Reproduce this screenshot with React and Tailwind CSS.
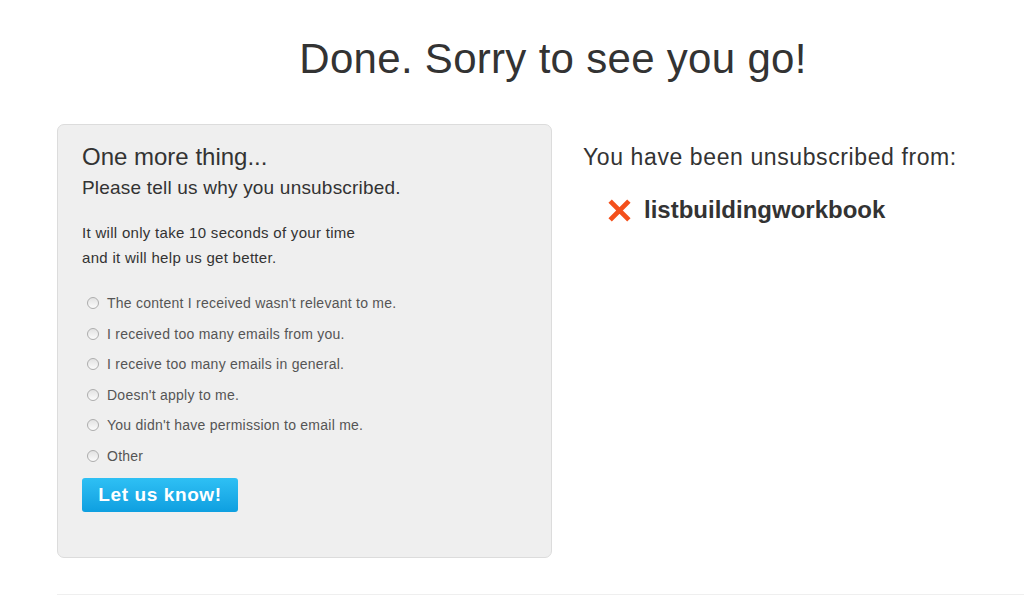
import React from 'react';

const reasons = [
  "The content I received wasn't relevant to me.",
  'I received too many emails from you.',
  'I receive too many emails in general.',
  "Doesn't apply to me.",
  "You didn't have permission to email me.",
  'Other',
];

export default function App() {
  return (
    <div className="min-h-screen bg-white text-[#333] font-['Liberation_Sans',Arial,sans-serif]">
      <h1 className="pt-[36px] text-center text-[42px] leading-[46px] tracking-[0.3px] text-[#333] pl-[82px]">
        Done. Sorry to see you go!
      </h1>

      <div className="flex pl-[57px] pt-[42px] gap-[31px]">
        {/* feedback panel */}
        <div className="w-[495px] h-[434px] shrink-0 rounded-[7px] border border-[#dcdcdc] bg-[#efefef] px-[24px] pt-[18px]">
          <h2 className="text-[24px] leading-[28px] text-[#333]">One more thing...</h2>
          <p className="mt-[6px] text-[19px] leading-[22px] tracking-[0.2px] text-[#333]">
            Please tell us why you unsubscribed.
          </p>
          <p className="mt-[21px] text-[15px] leading-[25px] tracking-[0.3px] text-[#333]">
            It will only take 10 seconds of your time
            <br />
            and it will help us get better.
          </p>

          <div className="mt-[23px] flex flex-col gap-[10.6px] pl-[5px]">
            {reasons.map((r) => (
              <label
                key={r}
                className="flex items-center gap-[8px] text-[14px] leading-[20px] tracking-[0.25px] text-[#555]"
              >
                <span className="w-[12px] h-[12px] shrink-0 rounded-full border border-[#adadad] bg-gradient-to-b from-[#e2e2e2] to-[#fbfbfb]" />
                {r}
              </label>
            ))}
          </div>

          <button className="mt-[12px] w-[156px] h-[34px] rounded-[3px] bg-gradient-to-b from-[#2ec0f4] to-[#0d9fe0] text-white text-[19px] font-bold tracking-[0.6px] leading-none">
            Let us know!
          </button>
        </div>

        {/* right column */}
        <div className="pt-[19px]">
          <p className="text-[23px] leading-[28px] tracking-[0.6px] text-[#333]">You have been unsubscribed from:</p>
          <div className="mt-[25px] ml-[25px] flex items-center gap-[13px]">
            <svg width="23" height="23" viewBox="0 0 24 24">
              <path d="M4 4 L20 20 M20 4 L4 20" stroke="#f4501b" strokeWidth="5" strokeLinecap="square" />
            </svg>
            <span className="text-[24px] leading-[28px] font-bold text-[#333]">listbuildingworkbook</span>
          </div>
        </div>
      </div>

      <div className="ml-[57px] mt-[36px] border-t border-[#efefef]" />
    </div>
  );
}
